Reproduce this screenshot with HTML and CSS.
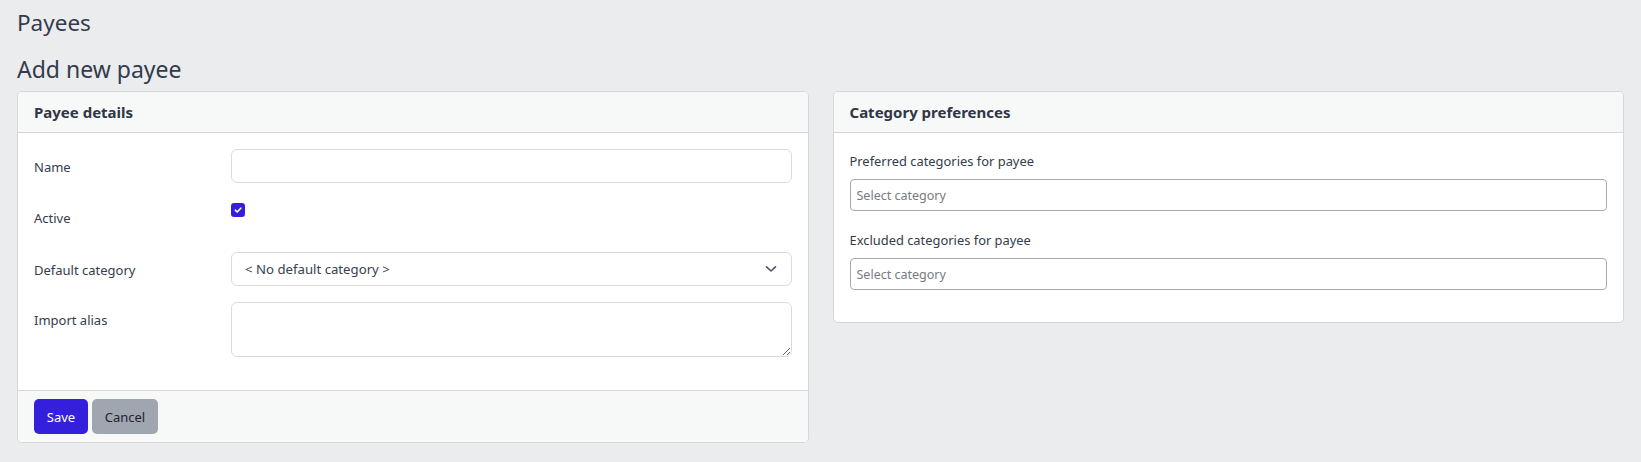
FILE: index.html
```html
<!DOCTYPE html>
<html lang="en">
<head>
<meta charset="utf-8">
<title>Payees</title>
<link rel="stylesheet" href="styles.css">
</head>
<body>
<div class="page">
  <h1 class="page-title">Payees</h1>
  <h2 class="sub-title">Add new payee</h2>
  <div class="cols">
    <div class="card">
      <div class="card-header">Payee details</div>
      <div class="card-body">
        <div class="row">
          <label class="col-label">Name</label>
          <div class="col-field"><input class="form-control" type="text"></div>
        </div>
        <div class="row row-check">
          <label class="col-label">Active</label>
          <div class="col-field"><span class="check"><svg width="10" height="10" viewBox="0 0 10 10"><path d="M2.3 5.2 L4.2 7 L7.8 3.2" fill="none" stroke="#fff" stroke-width="1.6" stroke-linecap="round" stroke-linejoin="round"/></svg></span></div>
        </div>
        <div class="row">
          <label class="col-label">Default category</label>
          <div class="col-field">
            <div class="form-select">
              <span>&lt; No default category &gt;</span>
              <svg class="chev" width="12" height="8" viewBox="0 0 12 8"><path d="M1.5 1.8 L6 6 L10.5 1.8" fill="none" stroke="#4a5568" stroke-width="1.6" stroke-linecap="round" stroke-linejoin="round"/></svg>
            </div>
          </div>
        </div>
        <div class="row">
          <label class="col-label">Import alias</label>
          <div class="col-field"><textarea class="form-control textarea"></textarea></div>
        </div>
      </div>
      <div class="card-footer">
        <button class="btn btn-primary">Save</button>
        <button class="btn btn-secondary">Cancel</button>
      </div>
    </div>
    <div class="card">
      <div class="card-header">Category preferences</div>
      <div class="card-body">
        <div class="stack">
          <label class="form-label">Preferred categories for payee</label>
          <div class="select2">Select category</div>
        </div>
        <div class="stack">
          <label class="form-label">Excluded categories for payee</label>
          <div class="select2">Select category</div>
        </div>
      </div>
    </div>
  </div>
</div>
</body>
</html>
```
FILE: styles.css
```css
* { box-sizing: border-box; }
html, body { margin: 0; padding: 0; }
body {
  background: #ebecee;
  font-family: "Noto Sans", "Open Sans", sans-serif;
  color: #353c4c;
  font-size: 13px;
}
.page { padding: 0 17px; }
.page-title {
  margin: 0;
  padding-top: 8px;
  font-size: 22.5px;
  font-weight: 400;
  line-height: 30px;
  color: #333b4c;
}
.sub-title {
  margin: 16px 0 7px;
  font-size: 23px;
  font-weight: 400;
  line-height: 30px;
  color: #333b4c;
}
.cols {
  display: grid;
  grid-template-columns: 1fr 1fr;
  gap: 24px;
  align-items: start;
}
.card {
  background: #fff;
  border: 1px solid #d5d7da;
  border-radius: 5px;
  overflow: hidden;
}
.card-header {
  background: #f7f8f8;
  border-bottom: 1px solid #d5d7da;
  height: 41px;
  padding: 0 16px;
  display: flex;
  align-items: center;
  font-weight: 700;
  font-size: 15px;
  color: #2f3646;
}
.card-body { padding: 16px 16px 0; }
.row {
  display: flex;
  margin-bottom: 16px;
}
.row:last-child { margin-bottom: 33px; }
.col-label {
  width: 197px;
  flex: none;
  padding-top: 8px;
  line-height: 20px;
  min-height: 34px;
}
.row-check .col-label { min-height: 37px; padding-top: 9px; }
.col-field { flex: 1; min-width: 0; }
.form-control {
  display: block;
  width: 100%;
  height: 34px;
  border: 1px solid #d9dbe0;
  border-radius: 6px;
  background: #fff;
  font: inherit;
  margin: 0;
}
.textarea { height: 55px; resize: vertical; }
.check {
  display: inline-flex;
  align-items: center;
  justify-content: center;
  width: 14px;
  height: 14px;
  margin-top: 4px;
  border-radius: 3px;
  background: #3420dc;
}
.form-select {
  height: 34px;
  border: 1px solid #d9dbe0;
  border-radius: 6px;
  display: flex;
  align-items: center;
  justify-content: space-between;
  padding: 0 14px 0 13px;
  font-size: 13.2px;
  color: #3a4150;
}
.chev { display: block; }
.card-footer {
  background: #f7f8f8;
  border-top: 1px solid #d5d7da;
  padding: 8px 16px;
  display: flex;
  gap: 4px;
}
.btn {
  height: 35px;
  border: 0;
  border-radius: 5px;
  font: inherit;
  font-size: 13px;
  padding: 0 12px;
  margin: 0;
}
.btn-primary { background: #3420dc; color: #fff; width: 54px; }
.btn-secondary { background: #a0a6b0; color: #1f2330; width: 66px; }
.stack { margin-bottom: 17px; }
.stack:last-child { margin-bottom: 32px; }
.form-label {
  display: block;
  line-height: 21px;
  padding-top: 2px;
  margin-bottom: 7px;
  font-size: 12.9px;
}
.select2 {
  height: 32px;
  border: 1px solid #aaaaaa;
  border-radius: 4px;
  display: flex;
  align-items: center;
  padding-left: 6px;
  color: #777b82;
  font-size: 12.5px;
}
```
